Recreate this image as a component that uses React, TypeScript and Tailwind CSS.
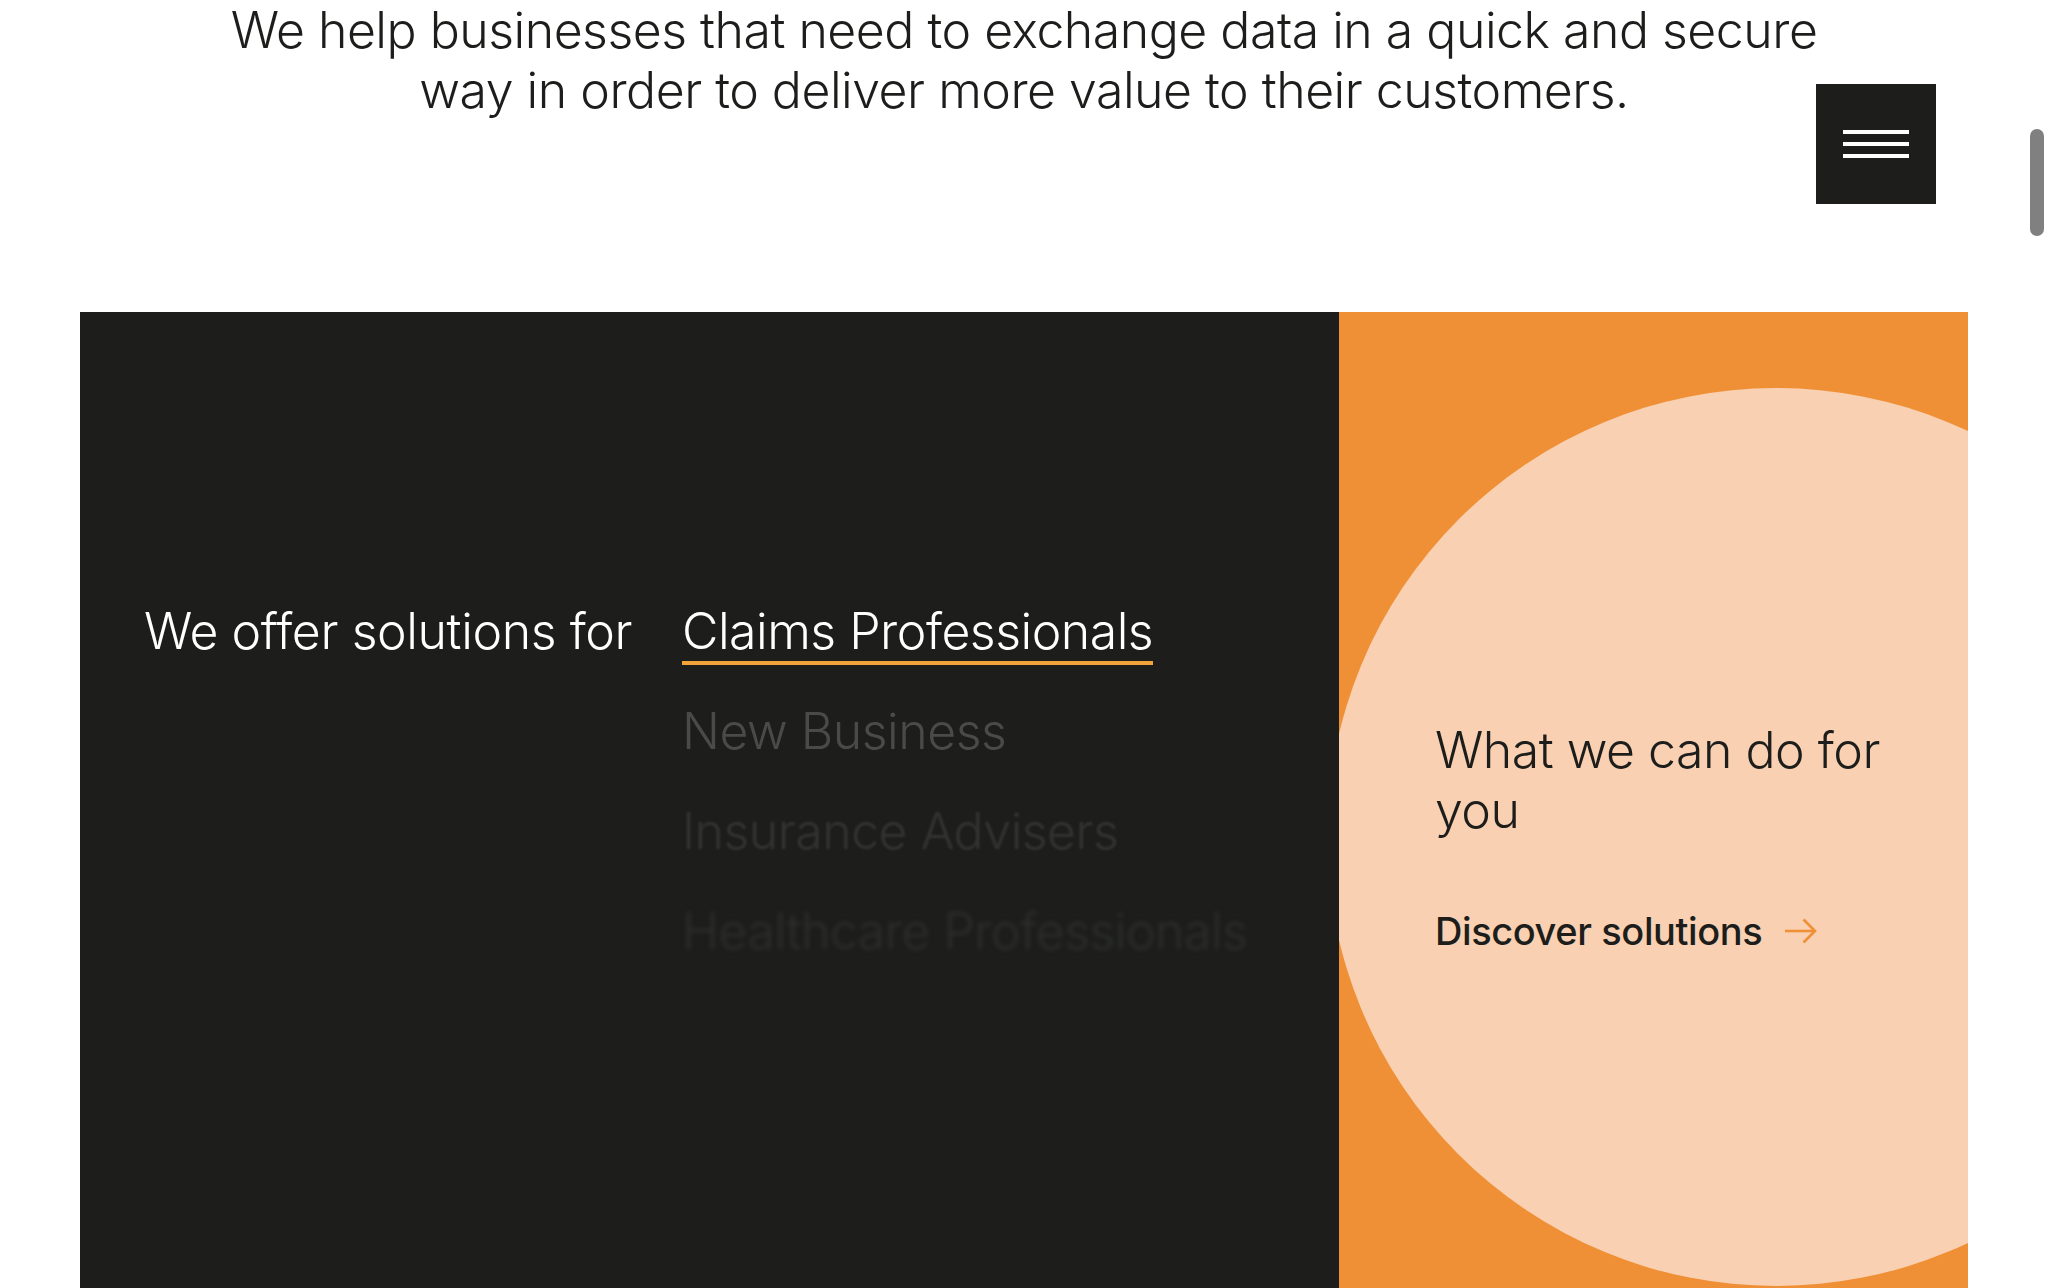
import { Fragment } from 'react';

const audiences = [
  { label: 'Claims Professionals', className: 'text-white' },
  { label: 'New Business', className: 'text-[#4a4b49]' },
  { label: 'Insurance Advisers', className: 'text-[#333432] blur-[1px]' },
  { label: 'Healthcare Professionals', className: 'text-[#2d2e2c] blur-[2px]' },
];

function MenuButton() {
  return (
    <button
      type="button"
      aria-label="Open menu"
      className="absolute top-[84px] right-[112px] w-[120px] h-[120px] bg-[#1d1e1c] flex flex-col items-center justify-center gap-[8px]"
    >
      <span className="block w-[66px] h-[4px] bg-white" />
      <span className="block w-[66px] h-[4px] bg-white" />
      <span className="block w-[66px] h-[4px] bg-white" />
    </button>
  );
}

function ArrowRight() {
  return (
    <svg width="33" height="26" viewBox="0 0 33 26" fill="none" className="shrink-0">
      <path d="M1 13H31" stroke="#f09036" strokeWidth="2.6" />
      <path d="M19.5 1.5L31 13L19.5 24.5" stroke="#f09036" strokeWidth="2.6" />
    </svg>
  );
}

export default function App() {
  return (
    <div className="relative w-full h-[1288px] overflow-hidden bg-white text-[#1d1e1c] font-['Inter','Liberation_Sans',sans-serif]">
      {/* Intro */}
      <p className="text-center text-[50px] leading-[60px] font-light tracking-[-0.5px]">
        We help businesses that need to exchange data in a quick and secure
        <br />
        way in order to deliver more value to their customers.
      </p>

      <MenuButton />

      {/* Solutions panel */}
      <section className="mx-[80px] mt-[192px] flex h-[1100px]">
        <div className="w-[1259px] bg-[#1d1e1c] pt-[289px] pl-[64px] flex">
          <div className="w-[538px] shrink-0 text-white text-[50px] leading-[60px] font-light tracking-[-0.4px]">
            We offer solutions for
          </div>
          <ul className="flex flex-col">
            {audiences.map((item, i) => (
              <li key={item.label} className={`h-[100px] text-[50px] leading-[60px] font-light tracking-[-0.5px] whitespace-nowrap ${item.className}`}>
                {i === 0 ? (
                  <span className="inline-block border-b-4 border-[#f2a43a]">{item.label}</span>
                ) : (
                  <Fragment>{item.label}</Fragment>
                )}
              </li>
            ))}
          </ul>
        </div>

        <div className="relative flex-1 bg-[#f09036] overflow-hidden">
          <div className="absolute left-[-12px] top-[76px] w-[898px] h-[898px] rounded-full bg-[#f9d1b2]" />
          <div className="relative pt-[408px] pl-[96px]">
            <h3 className="w-[470px] text-[50px] leading-[60px] font-light tracking-[-0.5px]">What we can do for you</h3>
            <a href="#" className="mt-[67px] flex items-center gap-[22px] text-[38px] leading-[48px] font-medium tracking-[-0.4px]">
              Discover solutions
              <ArrowRight />
            </a>
          </div>
        </div>
      </section>

      {/* overlay scrollbar thumb */}
      <div className="absolute top-[129px] right-[4px] w-[14px] h-[107px] rounded-full bg-[#808080]" />
    </div>
  );
}
